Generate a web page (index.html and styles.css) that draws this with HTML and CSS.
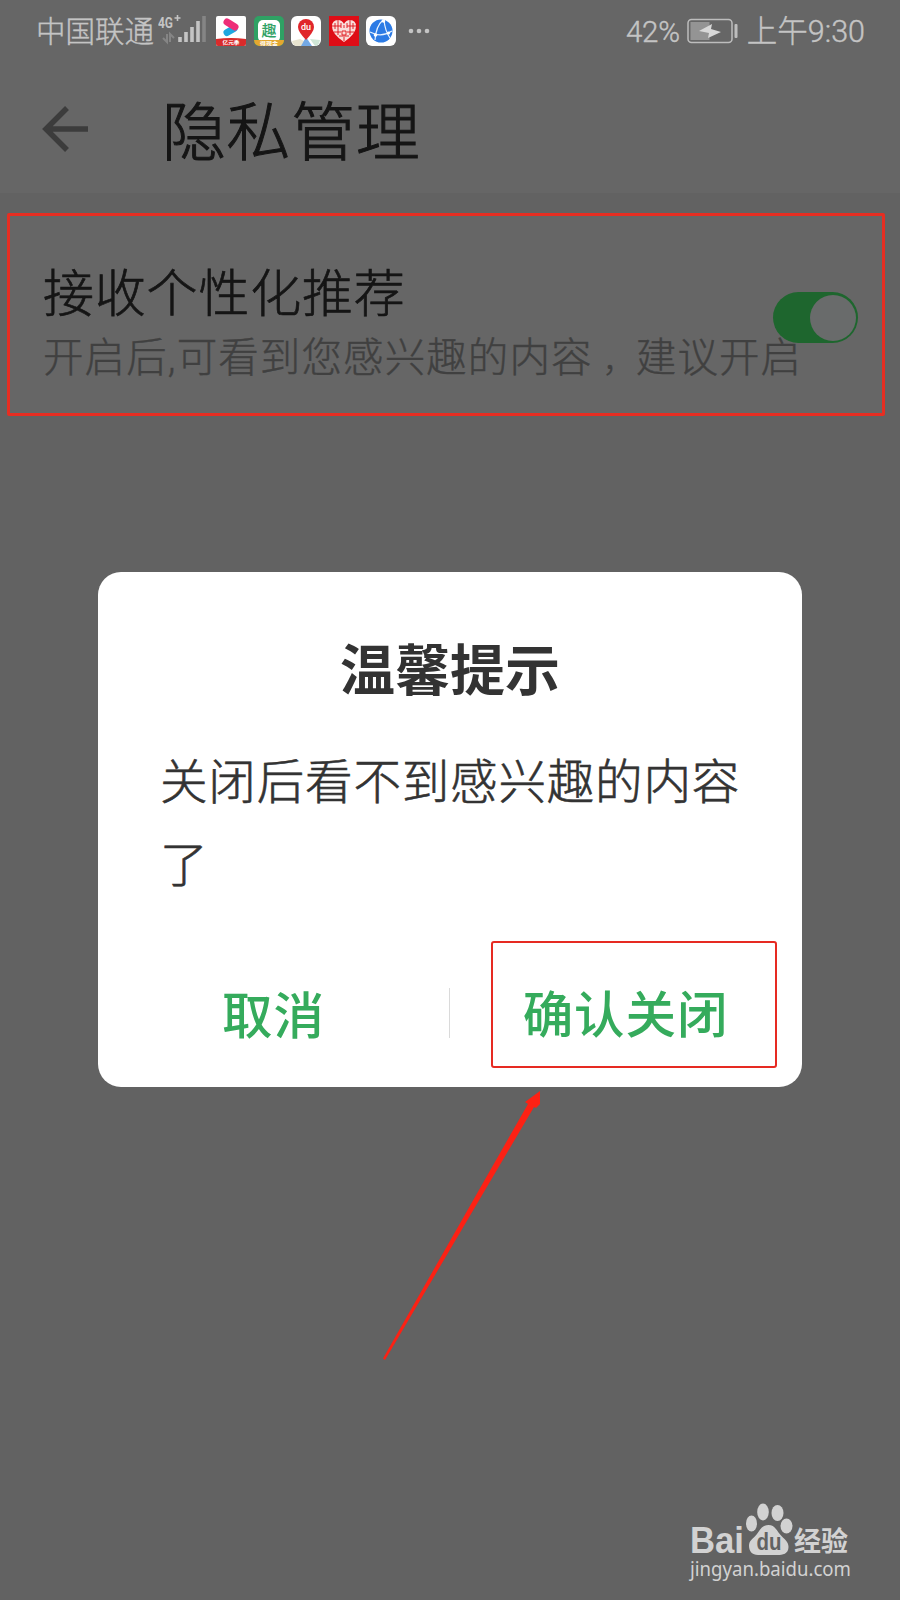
FILE: index.html
```html
<!DOCTYPE html>
<html lang="zh-CN">
<head>
    <meta charset="UTF-8">
    <meta name="viewport" content="width=device-width, initial-scale=1.0">
    <title>隐私管理</title>
    <link rel="stylesheet" href="styles.css">
</head>
<body>
    <div class="screen">
        <div class="status-bar">
            <span class="carrier">中国联通</span>
            <svg class="signal" width="48" height="40" viewBox="0 -4 48 40">
                <text class="network" x="0" y="13" textLength="15" lengthAdjust="spacingAndGlyphs">4G</text>
                <path d="M19.500 0v6M16.500 3h6" stroke="#c4c4c4" stroke-width="1.600"/>
                <path d="M9 19v8l-4-4M12 27v-8l4 4" fill="none" stroke="#858585" stroke-width="2"/>
                <path d="M22 27v-5M28 27V17M34 27V12M40 27V6" stroke="#c4c4c4" stroke-width="3.600"/>
                <path d="M46 27V1" stroke="#858585" stroke-width="3.600"/>
            </svg>
            <div class="apps">
                <svg width="30" height="30" viewBox="0 0 30 30">
                    <rect width="30" height="30" rx="2" fill="#fff"/>
                    <path d="M11 16.500l7-4" stroke="#20a8e0" stroke-width="7" stroke-linecap="round"/>
                    <path d="M11 6l8 5" stroke="#ee2e78" stroke-width="7" stroke-linecap="round"/>
                    <path d="M0 23q15-2 30 0v5q0 2-2 2H2q-2 0-2-2z" fill="#d92b2b"/>
                    <text class="badge" x="15" y="28" textLength="17" lengthAdjust="spacingAndGlyphs">亿元季</text>
                </svg>
                <svg width="30" height="30" viewBox="0 0 30 30">
                    <rect width="30" height="30" rx="5" fill="#2fa164"/>
                    <rect x="4" y="4" width="22" height="22" rx="5" fill="#fff"/>
                    <text class="qu" x="15" y="19.500">趣</text>
                    <path d="M0 24h30q0 5-5 6H5q-5-1-5-6z" fill="#e5a730"/>
                    <text class="badge" x="15" y="28.500" textLength="18" lengthAdjust="spacingAndGlyphs">得现金</text>
                </svg>
                <svg width="30" height="30" viewBox="0 0 30 30">
                    <rect width="30" height="30" rx="6" fill="#fff"/>
                    <path d="M1 25l8-2 6 3-4 4H6q-4 0-5-5z" fill="#e8e4cf"/>
                    <path d="M15 21l6 9H10z" fill="#73a9e5"/>
                    <path d="M19 23l10 1q-1 6-5 6z" fill="#cfe6d6"/>
                    <path d="M15 24Q7 15.500 7 11a8 8 0 0 1 16 0q0 4.500-8 13z" fill="#e0262b"/>
                    <text class="du" x="15" y="13.500">du</text>
                </svg>
                <svg width="30" height="30" viewBox="0 0 30 30">
                    <rect width="30" height="30" fill="#de0d16"/>
                    <path d="M15 26Q3 18 3 10.500 3 4 9 4q4 0 6 4 2-4 6-4 6 0 6 6.500Q27 18 15 26z" fill="#f9dedb"/>
                    <path d="M3 10h9M18 10h9M5 16h7M18 16h7M9 4v15M21 4v15M13 15h4v4h-4zM6 7v6M24 7v6M12 7v5M18 7v5M10 20h10M15 9v3M15 21v4" fill="none" stroke="#de0d16" stroke-width="0.900"/>
                </svg>
                <svg width="30" height="30" viewBox="0 0 30 30">
                    <rect width="30" height="30" rx="6" fill="#fff"/>
                    <circle cx="15" cy="15" r="11.500" fill="#2c7be5"/>
                    <path d="M17 4Q10 10 9 24M4 16q11 6 22-1M18 4q1 11 6 18" fill="none" stroke="#e8f3ff" stroke-width="1.200"/>
                    <circle cx="17.500" cy="5" r="1.800" fill="#fff"/>
                    <circle cx="9.500" cy="19" r="1.800" fill="#fff"/>
                    <circle cx="22.500" cy="17" r="1.600" fill="#fff"/>
                </svg>
            </div>
            <svg class="more" width="22" height="6" viewBox="0 0 22 6" fill="#c4c4c4">
                <circle cx="3" cy="3" r="2.300"/>
                <circle cx="11" cy="3" r="2.300"/>
                <circle cx="19" cy="3" r="2.300"/>
            </svg>
            <span class="percent">42%</span>
            <svg class="battery" width="52" height="26" viewBox="0 0 52 26">
                <rect x="1" y="1.500" width="44" height="23" rx="3.500" fill="none" stroke="#bdbdbd" stroke-width="1.500"/>
                <rect x="3.500" y="4" width="19" height="18" fill="#949494"/>
                <path d="M12 13l13-7-1 5 10 3-13 6 1-5z" fill="#d8d8d8"/>
                <rect x="47.500" y="6" width="3" height="14" rx="1" fill="#bdbdbd"/>
            </svg>
            <span class="clock">上午9:30</span>
        </div>

        <div class="header">
            <svg class="back" width="48" height="48" viewBox="0 0 48 48">
                <path d="M25 3L4 24l21 21M4 24h42" fill="none" stroke="#3c3c3c" stroke-width="5.500"/>
            </svg>
            <h1>隐私管理</h1>
        </div>

        <div class="setting">
            <div class="setting-text">
                <h2>接收个性化推荐</h2>
                <p>开启后,可看到您感兴趣的内容<span class="comma">，</span>建议开启</p>
            </div>
            <div class="toggle"><div class="knob"></div></div>
        </div>

        <div class="dialog">
            <h3>温馨提示</h3>
            <p>关闭后看不到感兴趣的内容了</p>
            <div class="actions">
                <button class="cancel">取消</button>
                <div class="divider"></div>
                <button class="confirm">确认关闭</button>
            </div>
        </div>

        <svg class="pointer" width="170" height="280" viewBox="0 0 170 280">
            <path d="M3 269.500L148 15l-3-2 15-11v13l-4 4-2-1L5 271z" fill="#fc2114"/>
        </svg>

        <svg class="watermark" width="190" height="100" viewBox="0 0 190 100" fill="#d2d2d2">
            <text class="bai" x="10" y="53" textLength="54" lengthAdjust="spacingAndGlyphs">Bai</text>
            <ellipse cx="71.500" cy="23.500" rx="5.500" ry="8"/>
            <ellipse cx="83" cy="12" rx="5.800" ry="8.500"/>
            <ellipse cx="97.500" cy="13" rx="6" ry="8"/>
            <ellipse cx="106.500" cy="26" rx="6" ry="7.500"/>
            <path d="M88.500 25c7 0 8 6 13 11 4 4 7 6 7 11 0 7-6 8-11 8H78c-6 0-9-4-9-9 0-6 4-7 8-12 3-4 5-9 11.500-9z"/>
            <text class="paw" x="89" y="50" textLength="25" lengthAdjust="spacingAndGlyphs">du</text>
            <text class="jingyan" x="114" y="51" textLength="54" lengthAdjust="spacingAndGlyphs">经验</text>
            <text class="site" x="10" y="76" textLength="161" lengthAdjust="spacingAndGlyphs">jingyan.baidu.com</text>
        </svg>
    </div>
</body>
</html>
```

FILE: styles.css
```css
* {
    box-sizing: border-box;
}
body {
    margin: 0;
    font-family: Roboto, 'Noto Sans CJK SC', sans-serif;
    background: #626262;
}
h1, h2, h3, p {
    margin: 0;
    white-space: nowrap;
}
.screen {
    position: relative;
    width: 900px;
    height: 1600px;
    overflow: hidden;
    background: #626262;
}
.status-bar {
    display: flex;
    align-items: center;
    height: 62px;
    padding: 0 35px 0 36px;
    background: #666;
    color: #c4c4c4;
    font-size: 29.5px;
    font-weight: 300;
    line-height: 60px;
    white-space: nowrap;
    -webkit-text-stroke: 0.4px #c4c4c4;
}
.status-bar svg {
    -webkit-text-stroke: 0;
}
.carrier {
    width: 122px;
    padding-top: 2px;
}
.signal {
    margin-right: 10px;
}
.network {
    font-size: 15px;
    font-weight: 700;
    fill: #c4c4c4;
}
.apps {
    display: flex;
    gap: 7.500px;
}
.badge {
    font-size: 5px;
    font-weight: 700;
    fill: #fff;
    text-anchor: middle;
}
.qu {
    font-size: 15px;
    font-weight: 500;
    fill: #2fa164;
    text-anchor: middle;
}
.du {
    font-size: 9px;
    font-weight: 500;
    fill: #fff;
    text-anchor: middle;
}
.more {
    margin-left: 12px;
}
.percent {
    margin-left: auto;
    padding-top: 1px;
    letter-spacing: -0.2px;
}
.battery {
    margin: 0 8px 0 7px;
}
.clock {
    padding-top: 2px;
    font-size: 30.5px;
}
.header {
    display: flex;
    align-items: center;
    height: 131px;
    padding: 2px 0 0 42px;
    background: #666;
}
.header h1 {
    margin: 11px 0 0 72px;
    color: #151515;
    font-size: 64px;
    font-weight: 300;
    line-height: 90px;
    letter-spacing: 0.600px;
    -webkit-text-stroke: 1px #151515;
}
.setting {
    display: flex;
    align-items: flex-start;
    width: 878px;
    height: 203px;
    margin: 20px 0 0 7px;
    padding: 45px 24px 0 33px;
    border: 3px solid #e62e22;
    border-radius: 2px;
    background: #666;
}
.setting-text {
    width: 730px;
}
.setting h2 {
    color: #151515;
    font-size: 51px;
    font-weight: 300;
    line-height: 68px;
    letter-spacing: 0.800px;
    -webkit-text-stroke: 0.7px #151515;
}
.setting p {
    color: #404040;
    font-size: 40.500px;
    font-weight: 300;
    line-height: 58px;
    letter-spacing: 1.100px;
    -webkit-text-stroke: 0.4px #404040;
}
.comma {
    padding-left: 10px;
    font-size: 32px;
}
.toggle {
    position: relative;
    flex: none;
    width: 85px;
    height: 51px;
    margin-top: 31px;
    padding: 2.500px;
    border-radius: 26px;
    background: #1e662e;
}
.knob {
    width: 46px;
    height: 46px;
    margin-left: auto;
    border-radius: 50%;
    background: #696b6b;
}
.dialog {
    position: absolute;
    left: 98px;
    top: 572px;
    width: 704px;
    height: 515px;
    padding-top: 59px;
    border-radius: 23px;
    background: #fff;
    color: #333;
}
.dialog h3 {
    font-size: 55px;
    font-weight: 700;
    line-height: 80px;
    text-align: center;
}
.dialog p {
    width: 584px;
    margin: 31px 0 0 62px;
    font-size: 47.600px;
    font-weight: 300;
    line-height: 83px;
    letter-spacing: 0.750px;
    white-space: normal;
    -webkit-text-stroke: 0.6px #333;
}
.actions {
    display: flex;
    align-items: center;
    margin-top: 33px;
}
.actions button {
    height: 127px;
    border: none;
    background: none;
    color: #35ab5c;
    font-family: inherit;
    font-size: 50.500px;
    font-weight: 500;
    letter-spacing: 0.900px;
    white-space: nowrap;
    padding: 14px 0 0;
}
.actions .cancel {
    width: 351px;
}
.divider {
    width: 1px;
    height: 50px;
    margin-top: 16px;
    background: #dadada;
}
.actions .confirm {
    width: 286px;
    margin-left: 41px;
    border: 2px solid #e62a22;
    border-radius: 3px;
    padding: 13px 17px 0 0;
}
.pointer {
    position: absolute;
    left: 380px;
    top: 1089px;
}
.watermark {
    position: absolute;
    left: 680px;
    top: 1500px;
}
.bai {
    font-family: 'Liberation Sans', sans-serif;
    font-size: 36px;
    font-weight: 700;
}
.paw {
    font-family: 'Liberation Sans', sans-serif;
    font-size: 23px;
    font-weight: 700;
    fill: #626262;
    text-anchor: middle;
}
.jingyan {
    font-size: 27px;
    font-weight: 700;
}
.site {
    font-family: 'Noto Sans', sans-serif;
    font-size: 20px;
}
```
